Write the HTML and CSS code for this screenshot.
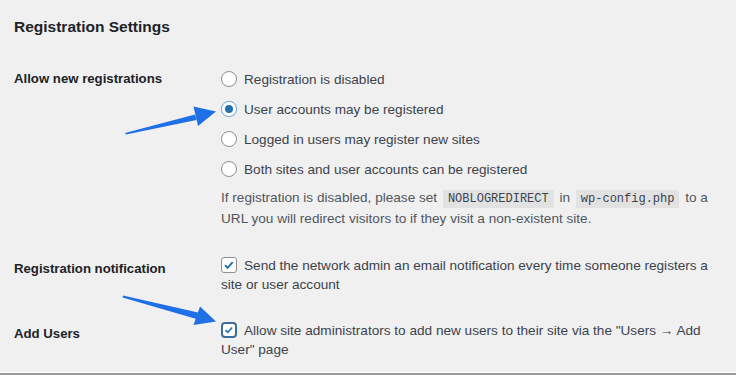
FILE: index.html
```html
<!DOCTYPE html>
<html lang="en">
<head>
    <meta charset="UTF-8">
    <meta name="viewport" content="width=device-width, initial-scale=1.0">
    <title>Network Settings</title>
    <link rel="stylesheet" href="styles.css">
</head>
<body>
    <div class="wrap">
        <h2>Registration Settings</h2>

        <div class="form-table">
            <!-- Allow new registrations -->
            <div class="row">
                <div class="th">Allow new registrations</div>
                <div class="td">
                    <label class="radio-row"><span class="radio"></span>Registration is disabled</label>
                    <label class="radio-row"><span class="radio checked"></span>User accounts may be registered</label>
                    <label class="radio-row"><span class="radio"></span>Logged in users may register new sites</label>
                    <label class="radio-row"><span class="radio"></span>Both sites and user accounts can be registered</label>
                    <p class="description">If registration is disabled, please set <code>NOBLOGREDIRECT</code> in <code>wp-config.php</code> to a URL you will redirect visitors to if they visit a non-existent site.</p>
                </div>
            </div>

            <!-- Registration notification -->
            <div class="row">
                <div class="th offset">Registration notification</div>
                <div class="td">
                    <label class="check-row">
                        <span class="checkbox">
                            <svg viewBox="0 0 16 16"><path d="M3.4 8.2l3 3 5.8-6.6"/></svg>
                        </span>Send the network admin an email notification every time someone registers a site or user account
                    </label>
                </div>
            </div>

            <!-- Add Users -->
            <div class="row">
                <div class="th offset">Add Users</div>
                <div class="td">
                    <label class="check-row">
                        <span class="checkbox focus">
                            <svg viewBox="0 0 16 16"><path d="M3.4 8.2l3 3 5.8-6.6"/></svg>
                        </span>Allow site administrators to add new users to their site via the "Users → Add User" page
                    </label>
                </div>
            </div>
        </div>

        <!-- annotation arrows -->
        <svg class="arrows" width="736" height="375" viewBox="0 0 736 375">
            <polygon points="125,133 195,114.5 196.5,120 126,134.5"/>
            <polygon points="193.5,106.5 216,111.5 198,126"/>
            <polygon points="123,295.5 198,312.5 196.5,319 122.5,297.5"/>
            <polygon points="200,306.5 216,321.5 193.5,325"/>
        </svg>
    </div>
    <div class="rule"></div>
</body>
</html>
```

FILE: styles.css
```css
body {
    margin: 0;
    background-color: #f0f0f1;
    font-family: "Liberation Sans", Arial, sans-serif;
    font-size: 13.6px;
    color: #3c434a;
}

.wrap {
    position: relative;
    height: 373px;
    box-sizing: border-box;
    padding: 17px 14px 0;
    border-bottom: 1px solid #fff;
}

h2 {
    margin: 0 0 27px;
    font-size: 15.5px;
    line-height: 20px;
    font-weight: 700;
    color: #1d2327;
}

.row {
    display: grid;
    grid-template-columns: 207px 1fr;
    margin-bottom: 27px;
}

.th {
    font-size: 13.2px;
    font-weight: 700;
    color: #1d2327;
    line-height: 30px;
}

.th.offset {
    line-height: 19px;
    padding-top: 3px;
}

.td {
    max-width: 503px;
}

.radio-row {
    display: flex;
    align-items: center;
    height: 30px;
}

.radio {
    box-sizing: border-box;
    width: 16px;
    height: 16px;
    margin-right: 7px;
    border: 1px solid #8c8f94;
    border-radius: 50%;
    background-color: #fff;
    display: flex;
    align-items: center;
    justify-content: center;
}

.radio.checked {
    border-color: #7ea6cf;
    box-shadow: 0 0 0 1px #dbe6f2;
}

.radio.checked::before {
    content: "";
    width: 8px;
    height: 8px;
    border-radius: 50%;
    background-color: #2271b1;
}

.description {
    margin: 4px 0 0;
    line-height: 20px;
    color: #50575e;
}

code {
    font-family: "Liberation Mono", monospace;
    font-size: 12px;
    background-color: #e2e2e3;
    padding: 2px 5px;
    margin: 0 2px;
    color: #3c434a;
}

.check-row {
    display: block;
    line-height: 19px;
}

.checkbox {
    box-sizing: border-box;
    display: inline-block;
    vertical-align: -3px;
    width: 16px;
    height: 16px;
    margin-right: 7px;
    border: 1px solid #8c8f94;
    border-radius: 3px;
    background-color: #fff;
}

.checkbox svg {
    display: block;
    width: 14px;
    height: 14px;
    fill: none;
    stroke: #2271b1;
    stroke-width: 2.2;
}

.checkbox.focus {
    border: 2px solid #3b6e99;
    border-radius: 4px;
}

.checkbox.focus svg {
    width: 12px;
    height: 12px;
}

.arrows {
    position: absolute;
    left: 0;
    top: 0;
    fill: #1f6fe6;
    pointer-events: none;
}

.rule {
    height: 2px;
    background-color: #9b9b9c;
}
```
